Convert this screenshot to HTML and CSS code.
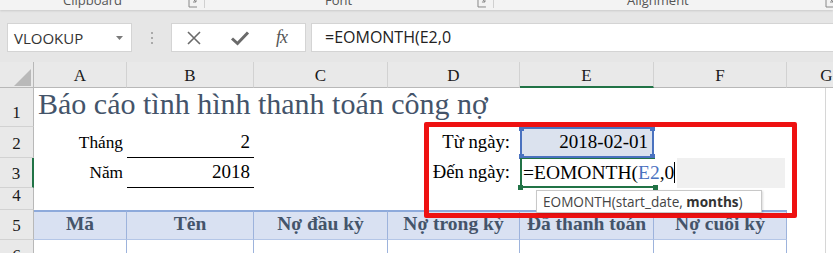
FILE: index.html
```
<!DOCTYPE html>
<html lang="vi">
<head>
<meta charset="utf-8">
<title>Excel</title>
<link rel="stylesheet" href="styles.css">
</head>
<body>
<div class="app">
  <div class="ribbon">
    <div class="group g-clip"><span class="glabel">Clipboard</span><svg class="launch" width="12" height="10" viewBox="0 0 12 10"><path d="M1 0 V8 H9" fill="none" stroke="#888" stroke-width="1"/><path d="M3 -2 L8 3 M8 0 V3 H5" fill="none" stroke="#888" stroke-width="1"/></svg><span class="gsep"></span></div>
    <div class="group g-font"><span class="glabel">Font</span><svg class="launch" width="12" height="10" viewBox="0 0 12 10"><path d="M1 0 V8 H9" fill="none" stroke="#888" stroke-width="1"/><path d="M3 -2 L8 3 M8 0 V3 H5" fill="none" stroke="#888" stroke-width="1"/></svg><span class="gsep"></span></div>
    <div class="group g-align"><span class="glabel">Alignment</span><svg class="launch" width="12" height="10" viewBox="0 0 12 10"><path d="M1 0 V8 H9" fill="none" stroke="#888" stroke-width="1"/><path d="M3 -2 L8 3 M8 0 V3 H5" fill="none" stroke="#888" stroke-width="1"/></svg></div>
  </div>
  <div class="fbar">
    <div class="namebox"><span>VLOOKUP</span><svg class="ddarrow" width="7" height="4" viewBox="0 0 7 4"><path d="M0 0 H7 L3.5 4 Z" fill="#7a7a7a"/></svg></div>
    <div class="grip"><i></i><i></i><i></i></div>
    <div class="fbtns">
      <svg class="ico" width="16" height="16" viewBox="0 0 16 16"><path d="M2 2 L14 14 M14 2 L2 14" stroke="#6a6a6a" stroke-width="1.6" fill="none"/></svg>
      <svg class="ico" width="20" height="16" viewBox="0 0 20 16"><path d="M2 8.5 L7.5 13.5 L18 2.5" stroke="#6a6a6a" stroke-width="3" fill="none"/></svg>
      <span class="fx">fx</span>
    </div>
    <div class="finput">=EOMONTH(E2,0</div>
  </div>
  <div class="sheet">
    <div class="ch corner"><svg width="17" height="17" viewBox="0 0 17 17"><path d="M17 0 V17 H0 Z" fill="#b9b9b9"/></svg></div>
    <div class="ch">A</div>
    <div class="ch">B</div>
    <div class="ch">C</div>
    <div class="ch">D</div>
    <div class="ch ch-sel">E</div>
    <div class="ch">F</div>
    <div class="ch">G</div>

    <div class="rh">1</div>
    <div class="c title">Báo cáo tình hình thanh toán công nợ</div>
    <div class="c gcol"></div>

    <div class="rh">2</div>
    <div class="c r lab">Tháng</div>
    <div class="c r ul">2</div>
    <div class="c"></div>
    <div class="c r ind">Từ ngày:</div>
    <div class="c r ref">2018-02-01<i class="h tl"></i><i class="h tr"></i><i class="h bl"></i><i class="h br"></i></div>
    <div class="c"></div>
    <div class="c gcol"></div>

    <div class="rh rh-sel">3</div>
    <div class="c r lab">Năm</div>
    <div class="c r ul">2018</div>
    <div class="c"></div>
    <div class="c r ind">Đến ngày:</div>
    <div class="c edit"><span class="active"><i class="gh gbl"></i><i class="gh gbr"></i></span><span class="etext">=EOMONTH(<span class="refc">E2</span>,0</span><span class="caret"></span></div>
    <div class="c gcol"></div>

    <div class="rh">4</div>
    <div class="c"></div><div class="c"></div><div class="c"></div><div class="c"></div><div class="c"></div><div class="c"></div>
    <div class="c gcol"></div>

    <div class="rh">5</div>
    <div class="c th">Mã</div>
    <div class="c th">Tên</div>
    <div class="c th">Nợ đầu kỳ</div>
    <div class="c th">Nợ trong kỳ</div>
    <div class="c th">Đã thanh toán</div>
    <div class="c th">Nợ cuối kỳ</div>
    <div class="c gcol"></div>

    <div class="rh">6</div>
    <div class="c td"></div><div class="c td"></div><div class="c td"></div><div class="c td"></div><div class="c td"></div><div class="c td"></div>
    <div class="c gcol"></div>

    <div class="redbox"></div>
    <div class="tip">EOMONTH(start_date, <b>months</b>)</div>
  </div>
</div>
</body>
</html>
```
FILE: styles.css
```
html, body {
  margin: 0;
  padding: 0;
  width: 833px;
  height: 253px;
  overflow: hidden;
  background: #e6e6e6;
}
.app {
  width: 833px;
  height: 253px;
  overflow: hidden;
  font-family: "Liberation Serif", "Times New Roman", serif;
}
.ribbon {
  height: 10px;
  background: #f3f3f3;
  display: flex;
  overflow: hidden;
  box-shadow: 0 1px 2px rgba(0,0,0,0.12);
  position: relative;
  z-index: 1;
  font-family: "Open Sans", "Noto Sans", sans-serif;
  font-size: 13px;
  color: #555;
}
.group {
  display: flex;
  align-items: flex-start;
  height: 10px;
}
.glabel {
  display: block;
  line-height: 14px;
  margin-top: -7px;
  white-space: nowrap;
}
.launch {
  margin-top: -1px;
}
.gsep {
  width: 1px;
  height: 8px;
  background: #d0d0d0;
  margin-left: 4px;
}
.g-clip { width: 205px; }
.g-clip .glabel { margin-left: 63px; width: 125px; }
.g-font { width: 289px; }
.g-font .glabel { margin-left: 120px; width: 153px; }
.g-align .glabel { margin-left: 133px; width: 198px; }

.fbar {
  height: 52px;
  display: flex;
  align-items: flex-start;
  padding: 13px 0 0 7px;
  box-sizing: border-box;
  font-family: "Open Sans", "Noto Sans", sans-serif;
}
.namebox {
  width: 125px;
  height: 29px;
  box-sizing: border-box;
  background: #fff;
  border: 1px solid #d4d4d4;
  display: flex;
  align-items: center;
  justify-content: space-between;
  padding: 0 8px 0 6px;
  font-size: 15px;
  color: #333;
}
.ddarrow { margin-top: 1px; }
.grip {
  width: 39px;
  height: 29px;
  display: flex;
  flex-direction: column;
  align-items: center;
  justify-content: center;
  gap: 3px;
}
.grip i {
  display: block;
  width: 2px;
  height: 2px;
  background: #aaa;
}
.fbtns {
  width: 135px;
  height: 29px;
  box-sizing: border-box;
  background: #fff;
  border: 1px solid #d4d4d4;
  display: flex;
  align-items: center;
  padding-left: 14px;
}
.fbtns .ico:first-child { margin-right: 28px; }
.fbtns .ico:nth-child(2) { margin-right: 26px; }
.fx {
  font-family: "Liberation Serif", serif;
  font-style: italic;
  font-size: 18px;
  color: #555;
  letter-spacing: -1px;
}
.finput {
  margin-left: 5px;
  flex: 1;
  height: 29px;
  box-sizing: border-box;
  background: #fff;
  border: 1px solid #d4d4d4;
  border-right: none;
  padding-left: 13px;
  line-height: 27px;
  font-size: 16px;
  color: #222;
}

.sheet {
  position: relative;
  display: grid;
  grid-template-columns: 34px 93px 127px 134px 132px 134px 133px 80px;
  grid-template-rows: 26px 39px 31px 30px 22px 30px 30px;
  background: #fff;
  width: 867px;
  color: #000;
}
.ch {
  background: #e9e9e9;
  border-right: 1px solid #d2d2d2;
  border-bottom: 1px solid #b8b8b8;
  box-sizing: border-box;
  display: flex;
  align-items: center;
  justify-content: center;
  font-size: 17px;
  color: #1a1a1a;
  padding-top: 3px;
}
.ch.corner {
  border-right: 1px solid #b8b8b8;
  justify-content: flex-end;
  align-items: flex-end;
  padding: 0 2px 1px 0;
}
.ch-sel {
  border-bottom: 2px solid #217346;
}
.rh {
  background: #e9e9e9;
  border-right: 1px solid #b8b8b8;
  border-bottom: 1px solid #d2d2d2;
  box-sizing: border-box;
  display: flex;
  align-items: flex-end;
  justify-content: center;
  padding-bottom: 3px;
  font-size: 17px;
  color: #1a1a1a;
}
.rh-sel {
  border-right: 2px solid #217346;
}
.c {
  position: relative;
  box-sizing: border-box;
  display: flex;
  align-items: flex-end;
  padding: 0 4px 5px 4px;
  font-size: 19px;
  white-space: nowrap;
}
.c.r { justify-content: flex-end; }
.c.lab { font-size: 17.3px; }
.c.ind { padding-right: 10px; font-size: 18.7px; }
.title {
  grid-column: 2 / 8;
  font-size: 30px;
  color: #44546a;
  padding: 0 0 6px 4px;
}
.gcol {
  background: linear-gradient(to right, transparent 38px, #d6d6d6 38px, #d6d6d6 39px, transparent 39px);
}
.ul {
  border-bottom: 1px solid #000;
  padding-bottom: 4px;
}
.ref {
  background: #dbe2ee;
  border: 2px solid #4a72bf;
  padding-right: 4px;
  padding-bottom: 3px;
}
.h {
  position: absolute;
  width: 5px;
  height: 5px;
  background: #4a72bf;
}
.tl { left: -3px; top: -3px; }
.tr { right: -3px; top: -3px; }
.bl { left: -3px; bottom: -3px; }
.br { right: -3px; bottom: -3px; }
.edit {
  grid-column: 6 / 8;
  padding: 0 0 4px 3px;
  font-size: 19.5px;
  background: linear-gradient(to right, #fff 157px, #f0f0f0 157px, #f0f0f0 265px, #fff 265px);
}
.active {
  position: absolute;
  left: 0;
  top: 0;
  width: 135px;
  height: 30px;
  box-sizing: border-box;
  border-left: 2px solid #217346;
  border-top: 1px solid #217346;
  border-bottom: 2px solid #217346;
}
.etext { position: relative; }
.refc { color: #4a72bf; }
.caret {
  position: relative;
  display: inline-block;
  width: 1px;
  height: 21px;
  background: #000;
  margin-bottom: 1px;
}
.gh {
  position: absolute;
  width: 5px;
  height: 5px;
  background: #217346;
  bottom: -4px;
}
.gbl { left: -4px; }
.gbr { right: -3px; }
.th {
  background: #d9e1f2;
  border-top: 2px solid #8eaadb;
  border-right: 1px solid #9db3dc;
  border-bottom: 1px solid #b4c6e7;
  justify-content: center;
  font-weight: bold;
  font-size: 19.5px;
  color: #44546a;
  padding-bottom: 4px;
}
.td {
  border-right: 1px solid #9db3dc;
  border-bottom: 1px solid #b4c6e7;
}
.redbox {
  position: absolute;
  left: 424px;
  top: 60px;
  width: 373px;
  height: 96px;
  box-sizing: border-box;
  border: 5px solid #ee1111;
  border-radius: 2px;
  pointer-events: none;
}
.tip {
  position: absolute;
  left: 536px;
  top: 128px;
  width: 226px;
  height: 23px;
  box-sizing: border-box;
  background: #fff;
  border: 1px solid #c8c8c8;
  box-shadow: 1px 1px 2px rgba(0,0,0,0.15);
  font-family: "Open Sans", "Noto Sans", sans-serif;
  font-size: 13.6px;
  color: #444;
  padding-left: 6px;
  line-height: 21px;
  white-space: nowrap;
}
.tip b { color: #333; }
```
